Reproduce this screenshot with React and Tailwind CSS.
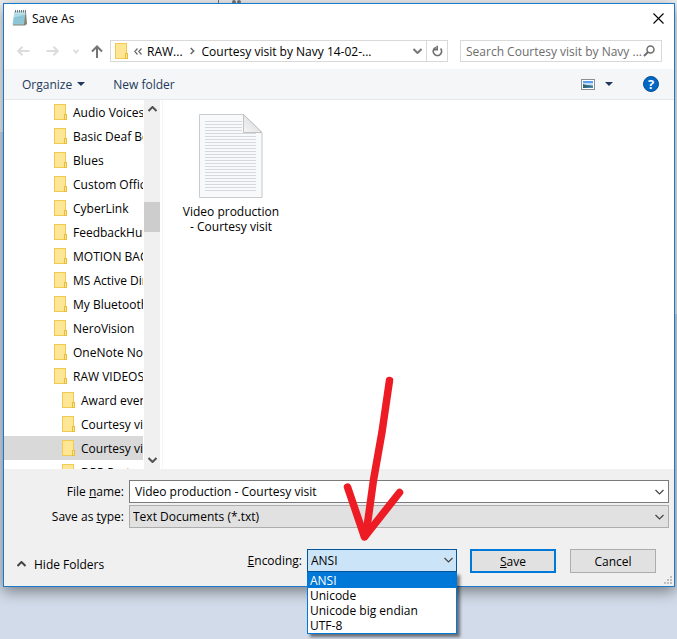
import { useState } from 'react';

const folders = [
    { id: 1, name: 'Audio Voices' },
    { id: 2, name: 'Basic Deaf Bo' },
    { id: 3, name: 'Blues' },
    { id: 4, name: 'Custom Office' },
    { id: 5, name: 'CyberLink' },
    { id: 6, name: 'FeedbackHub' },
    { id: 7, name: 'MOTION BACK' },
    { id: 8, name: 'MS Active Dire' },
    { id: 9, name: 'My Bluetooth' },
    { id: 10, name: 'NeroVision' },
    { id: 11, name: 'OneNote Note' },
    { id: 12, name: 'RAW VIDEOS' },
    { id: 13, name: 'Award event', nested: true },
    { id: 14, name: 'Courtesy visit', nested: true },
    { id: 15, name: 'Courtesy visit', nested: true, selected: true },
    { id: 16, name: 'DPP Party', nested: true },
];

const encodings = ['ANSI', 'Unicode', 'Unicode big endian', 'UTF-8'];

function FolderIcon() {
    return (
        <svg className="shrink-0" width="14" height="16" viewBox="0 0 14 16" aria-hidden="true">
            <rect x="0.5" y="0.5" width="11" height="15" fill="#ffe694" stroke="#efcb52" />
            <rect x="10.5" y="10.5" width="2" height="5" fill="#ffe694" stroke="#e8bf3d" />
        </svg>
    );
}

function Chevron({ up = false, bold = false, className = '' }) {
    return (
        <svg className={`shrink-0 ${className}`} width="9" height="6" viewBox="0 0 9 6" fill="none" aria-hidden="true">
            <path d={up ? 'M0.5 5L4.5 1L8.5 5' : 'M0.5 1L4.5 5L8.5 1'} stroke="currentColor" strokeWidth={bold ? 2 : 1.2} />
        </svg>
    );
}

function Caret() {
    return (
        <svg width="8" height="4" viewBox="0 0 8 4" aria-hidden="true">
            <path d="M0 0H8L4 4Z" fill="#1e395b" />
        </svg>
    );
}

function NotepadIcon() {
    return (
        <svg width="16" height="16" viewBox="0 0 16 16" aria-hidden="true">
            <path d="M3 2H14L15 14L13 15.5H1Z" fill="#8a8170" />
            <path d="M2.5 1.5H13.5L12 14.5H0.5Z" fill="#8fc9d9" />
            <path d="M2.5 1.5H13.5L13 5L2 7Z" fill="#bfe3ea" />
            <path d="M3 5H12M3 7.5H12M2.5 10H11.5M2 12.5H11" stroke="#7fbccd" strokeWidth="0.5" />
            <path d="M3.5 0V2.5M5.5 0V2.5M7.5 0V2.5M9.5 0V2.5M11.5 0V2.5M13.5 0V2.5" stroke="#555" strokeWidth="0.8" />
        </svg>
    );
}

function DocumentIcon() {
    const lines = Array.from({ length: 24 }, (_, i) => 7.5 + i * 3);
    return (
        <svg width="64" height="84" viewBox="0 0 64 84" aria-hidden="true">
            <defs>
                <linearGradient id="fold" x1="0" y1="1" x2="1" y2="0">
                    <stop offset="0" stopColor="#f6f6f6" />
                    <stop offset="1" stopColor="#d4d4d4" />
                </linearGradient>
            </defs>
            <path d="M0.5 0.5H44.5L63 18.5V83.5H0.5Z" fill="#f7f9fa" stroke="#c8cacb" />
            {lines.map(y => (
                <path key={y} d={`M6 ${y}H${y < 19 ? 43 : 57}`} stroke="#d5d9db" />
            ))}
            <path d="M44.5 0.5L63 18.5H44.5Z" fill="url(#fold)" stroke="#c0c2c3" />
        </svg>
    );
}

function TitleBar() {
    return (
        <header className="flex h-7 items-center justify-between pr-2.5 pl-2">
            <div className="flex items-center gap-1">
                <NotepadIcon />
                <h1>Save As</h1>
            </div>
            <button type="button" aria-label="Close">
                <svg width="11" height="11" viewBox="0 0 11 11" stroke="#000" strokeWidth="1.1" aria-hidden="true">
                    <path d="M0.5 0.5L10.5 10.5M10.5 0.5L0.5 10.5" />
                </svg>
            </button>
        </header>
    );
}

function NavBar() {
    return (
        <nav className="flex items-center pt-2 pr-3 pb-[7px] pl-[13px]">
            <div className="mr-[7px] flex items-center text-[#dcdcdc]">
                <button type="button" aria-label="Back" className="mr-4">
                    <svg width="13" height="10" viewBox="0 0 13 10" fill="none" stroke="currentColor" strokeWidth="2" aria-hidden="true">
                        <path d="M12.5 5H1.5M5.5 0.7L1.2 5L5.5 9.3" />
                    </svg>
                </button>
                <button type="button" aria-label="Forward" className="mr-3.5">
                    <svg width="13" height="10" viewBox="0 0 13 10" fill="none" stroke="currentColor" strokeWidth="2" aria-hidden="true">
                        <path d="M0.5 5H11.5M7.5 0.7L11.8 5L7.5 9.3" />
                    </svg>
                </button>
                <button type="button" aria-label="Recent locations" className="mr-3">
                    <svg width="6" height="5" viewBox="0 0 6 5" fill="none" stroke="currentColor" strokeWidth="1.8" aria-hidden="true">
                        <path d="M0.5 0.8L3 3.8L5.5 0.8" />
                    </svg>
                </button>
                <button type="button" aria-label="Up one level" className="text-[#747474]">
                    <svg width="12" height="13" viewBox="0 0 12 13" fill="none" stroke="currentColor" strokeWidth="2" aria-hidden="true">
                        <path d="M6 13V1.5M1 6.5L6 1.5L11 6.5" />
                    </svg>
                </button>
            </div>

            <div className="mr-3 flex h-[22px] min-w-0 flex-1 items-center border border-[#d9d9d9] pl-1">
                <FolderIcon />
                <svg className="mx-[5px] shrink-0" width="8" height="7" viewBox="0 0 8 7" fill="none" stroke="#666" strokeWidth="1.2" aria-hidden="true">
                    <path d="M3.5 0.5L0.8 3.5L3.5 6.5M7.5 0.5L4.8 3.5L7.5 6.5" />
                </svg>
                <a href="#raw">RAW...</a>
                <svg className="mx-[7px] shrink-0" width="5" height="8" viewBox="0 0 5 8" fill="none" stroke="#666" strokeWidth="1.5" aria-hidden="true">
                    <path d="M0.7 1L3.7 4L0.7 7" />
                </svg>
                <a href="#courtesy" className="flex-1 truncate">Courtesy visit by Navy 14-02-...</a>
                <button type="button" aria-label="Previous locations" className="px-1 text-[#767676]">
                    <Chevron bold />
                </button>
                <button type="button" aria-label="Refresh" className="flex h-full w-[21px] items-center justify-center border-l border-[#d9d9d9]">
                    <svg width="11" height="12" viewBox="0 0 11 12" fill="none" stroke="#6e6e6e" strokeWidth="1.6" aria-hidden="true">
                        <path d="M8.6 3.6A4.2 4.2 0 1 1 4 2.4" />
                        <path d="M5.2 0.8V4.6H1.4" />
                    </svg>
                </button>
            </div>

            <label className="flex h-[22px] w-[202px] items-center border border-[#d9d9d9] pr-1.5 pl-[5px]">
                <input
                    type="text"
                    aria-label="Search"
                    placeholder="Search Courtesy visit by Navy ..."
                    className="min-w-0 flex-1 outline-none placeholder:text-[#6d6d6d]"
                />
                <svg className="shrink-0" width="12" height="12" viewBox="0 0 12 12" fill="none" stroke="#6d6d6d" aria-hidden="true">
                    <circle cx="7.5" cy="4.5" r="3.5" strokeWidth="1.5" />
                    <path d="M5 7L1 11" strokeWidth="2" />
                </svg>
            </label>
        </nav>
    );
}

function Toolbar() {
    return (
        <div className="flex h-[31px] items-center border-b border-[#e8e8ea] bg-[#f5f6f7] pr-[15px] pl-[18px] text-[#1e395b]">
            <button type="button" className="mr-7 flex items-center gap-[5px]">
                Organize <Caret />
            </button>
            <button type="button" className="flex-1 text-left">New folder</button>
            <button type="button" aria-label="Change view" className="flex items-center gap-2.5">
                <svg width="14" height="11" viewBox="0 0 14 11" aria-hidden="true">
                    <rect x="0.5" y="0.5" width="13" height="10" fill="#fff" stroke="#8e8e8e" />
                    <rect x="2" y="2" width="10" height="3" fill="#5c9ff0" />
                    <rect x="2" y="4" width="10" height="2" fill="#bfe0f8" />
                    <path d="M2 5L5 6L12 6.5V9H2Z" fill="#2f6670" />
                    <path d="M4 9L12 7V9Z" fill="#4a86b8" />
                </svg>
                <Caret />
            </button>
            <button
                type="button"
                aria-label="Help"
                className="ml-[30px] flex h-4 w-4 items-center justify-center rounded-full border border-[#0a4f94] bg-[#0067c5] text-[13px] font-bold text-white"
            >
                ?
            </button>
        </div>
    );
}

function FolderTree() {
    return (
        <aside className="flex w-[159px] shrink-0 border-r border-[#f5f5f5]">
            <ul className="w-[139px] overflow-hidden">
                {folders.map(folder => (
                    <li
                        key={folder.id}
                        className={`flex h-6 items-center gap-[5px] whitespace-nowrap ${folder.nested ? 'pl-[58px]' : 'pl-[50px]'} ${folder.selected ? 'bg-[#d9d9d9]' : ''}`}
                    >
                        <FolderIcon />
                        {folder.name}
                    </li>
                ))}
            </ul>
            <div className="ml-px flex w-4 flex-col items-center bg-[#f0f0f0] py-1.5 text-[#505050]">
                <Chevron up bold />
                <div className="mt-[90px] h-[30px] w-full bg-[#cdcdcd]" />
                <Chevron bold className="mt-auto" />
            </div>
        </aside>
    );
}

function EncodingPicker({ value, onChange }) {
    return (
        <div className="relative w-[150px]">
            <select
                id="encoding"
                value={value}
                onChange={e => onChange(e.target.value)}
                className="block h-[23px] w-full appearance-none border border-[#00559b] bg-[#cce4f7] pl-[3px] outline-none"
            >
                {encodings.map(name => <option key={name}>{name}</option>)}
            </select>
            <Chevron className="pointer-events-none absolute top-2 right-1 text-[#444]" />

            <ul
                role="listbox"
                aria-label="Encoding"
                className="absolute top-full left-0 z-10 w-full border border-[#0078d7] bg-white shadow-[3px_3px_3px_rgba(0,0,0,0.5)]"
            >
                {encodings.map(name => (
                    <li
                        key={name}
                        role="option"
                        aria-selected={name === value}
                        onClick={() => onChange(name)}
                        className={`h-[15px] pl-0.5 ${name === value ? 'bg-[#0078d7] text-white' : ''}`}
                    >
                        {name}
                    </li>
                ))}
            </ul>

            <svg
                className="pointer-events-none absolute bottom-full left-8 z-10"
                width="72"
                height="177"
                viewBox="0 0 72 177"
                fill="none"
                stroke="#ed1c24"
                strokeWidth="7.5"
                strokeLinecap="round"
                strokeLinejoin="round"
                aria-hidden="true"
            >
                <path d="M50.5 8.5L43 60L34.5 108L29 148L26 164" />
                <path d="M8.5 115L25.5 165L60.5 120.5" />
            </svg>
        </div>
    );
}

function Footer() {
    const [fileName, setFileName] = useState('Video production - Courtesy visit');
    const [encoding, setEncoding] = useState('ANSI');

    return (
        <footer className="relative h-[117px] bg-[#f0f0f0] pt-[11px]">
            <div className="grid grid-cols-[120px_1fr] items-center gap-x-[5px] gap-y-0.5 pr-[5px]">
                <label htmlFor="file-name" className="text-right">File <u>n</u>ame:</label>
                <div className="flex h-[23px] items-center border border-[#7a7a7a] bg-white pr-1">
                    <input
                        id="file-name"
                        type="text"
                        value={fileName}
                        onChange={e => setFileName(e.target.value)}
                        className="min-w-0 flex-1 pl-[5px] outline-none"
                    />
                    <Chevron className="text-[#444]" />
                </div>
                <label htmlFor="file-type" className="text-right">Save as <u>t</u>ype:</label>
                <div className="flex h-[23px] items-center border border-[#adadad] bg-[#e1e1e1] pr-1">
                    <select id="file-type" className="min-w-0 flex-1 appearance-none pl-[3px] outline-none">
                        <option>Text Documents (*.txt)</option>
                    </select>
                    <Chevron className="text-[#444]" />
                </div>
            </div>

            <div className="mt-[21px] flex items-start pr-[18px] pl-[13px]">
                <button type="button" className="mr-auto flex h-[30px] items-center gap-2">
                    <Chevron up bold className="text-[#444]" />
                    Hide Folders
                </button>
                <label htmlFor="encoding" className="mr-[5px] leading-6"><u>E</u>ncoding:</label>
                <EncodingPicker value={encoding} onChange={setEncoding} />
                <button type="button" className="ml-[13px] h-6 w-[86px] border-2 border-[#0078d7] bg-[#e1e1e1]">
                    <u>S</u>ave
                </button>
                <button type="button" className="ml-3.5 h-6 w-[86px] border border-[#adadad] bg-[#e1e1e1]">
                    Cancel
                </button>
            </div>

            <svg className="absolute right-0.5 bottom-0.5" width="8" height="8" viewBox="0 0 8 8" fill="#bfbfbf" aria-hidden="true">
                <path d="M6 0H8V2H6ZM3 3H5V5H3ZM6 3H8V5H6ZM0 6H2V8H0ZM3 6H5V8H3ZM6 6H8V8H6Z" />
            </svg>
        </footer>
    );
}

export default function App() {
    return (
        <div className="relative flex min-h-screen overflow-hidden bg-[#d2dbe9] pt-[3px] pr-0.5 pb-[52px] pl-[3px] font-['Open_Sans','Noto_Sans',sans-serif] text-[12px] leading-[15px] text-black">
            {/* windows lying behind the dialog */}
            <div className="absolute top-0 left-0 h-[132px] w-[219px] border-r border-[#777] bg-[#f0f0f0]" />
            <div className="absolute top-0 right-0 left-[219px] h-[314px] bg-[#f0f0f0] pl-[13px]">
                <div className="w-[9px] border-t-4 border-dotted border-[#777]" />
            </div>

            <main className="relative flex min-w-0 flex-1 flex-col border border-[#1979ca] bg-white shadow-[0_4px_14px_rgba(0,0,0,0.45)]">
                <TitleBar />
                <NavBar />
                <Toolbar />
                <div className="flex min-h-0 flex-1 basis-0">
                    <FolderTree />
                    <section className="flex-1 pt-3.5 pl-[19px]">
                        <figure className="flex w-[98px] flex-col items-center gap-1.5 text-center">
                            <DocumentIcon />
                            <figcaption>Video production - Courtesy visit</figcaption>
                        </figure>
                    </section>
                </div>
                <Footer />
            </main>
        </div>
    );
}
